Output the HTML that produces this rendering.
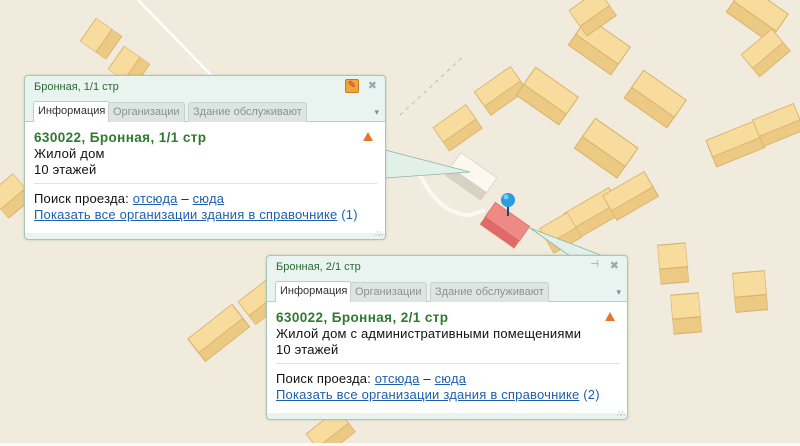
<!DOCTYPE html>
<html><head><meta charset="utf-8">
<style>
*{margin:0;padding:0;box-sizing:border-box}
body{width:800px;height:446px;overflow:hidden;background:#f0ebdd;position:relative;font-family:"Liberation Sans",sans-serif}
svg.map{position:absolute;left:0;top:0}
.pop{position:absolute;width:362px;height:165px;border:1px solid #a9c6b3;border-radius:4px;background:#e9f3ef;box-shadow:0 0 2px rgba(120,150,130,.4)}
.title{position:absolute;left:9px;top:5px;font-size:11px;color:#2d6a34}
.tabs{position:absolute;left:0;top:25px;width:100%;height:21px;border-bottom:1px solid #b9cfc2}
.tab{position:absolute;top:1px;height:20px;font-size:11px;line-height:19px;padding:0 4px;color:#8a948f;background:#dde4e1;border:1px solid #c8d2cd;border-bottom:none;border-radius:3px 3px 0 0}
.tab.act{background:#fff;color:#333;top:0;height:21px;border-color:#b9cfc2}
.body{position:absolute;left:0;top:46px;width:100%;height:111px;background:#fff;font-size:13px;letter-spacing:.2px;color:#111;padding:8px 0 0 9px;line-height:16px}
.body b{color:#2e7a2e;font-size:13.5px;letter-spacing:.4px}
.body a{color:#1e5fae;text-decoration:underline}
.body .lnk{color:#1e5fae}
.sep{height:1px;background:#dfe4e1;margin:5px 8px 7px 0}
.warn{position:absolute;right:12px;top:10px;width:0;height:0;border-left:5px solid transparent;border-right:5px solid transparent;border-bottom:9px solid #e5752f}
.grip{position:absolute;right:3px;bottom:1px;font-size:7px;color:#889;letter-spacing:-1px}
.x{position:absolute;right:8px;top:3px;font-size:11px;color:#9aa}
.dd{position:absolute;right:6px;top:31px;font-size:9px;color:#889}
</style></head><body>
<svg class="map" width="800" height="446" viewBox="0 0 800 446">
<defs>
<g id="b"><rect x="-20" y="-6" width="40" height="20" fill="#ecca84" stroke="#d8b46c" stroke-width=".8"/><rect x="-20" y="-12" width="40" height="16" fill="#f8dc9e" stroke="#d8b46c" stroke-width=".8"/></g>
</defs>
<line x1="138" y1="0" x2="212" y2="76" stroke="#fff" stroke-width="2.5"/>
<line x1="400" y1="115" x2="465" y2="55" stroke="#c9c4b6" stroke-width="1.2" stroke-dasharray="4,4"/>
<path d="M420 175 Q440 215 470 215 L485 210" stroke="#fbf9f3" stroke-width="4" fill="none"/>
<g transform="translate(100,38) rotate(-55) scale(.7,1.2)"><use href="#b"/></g>
<g transform="translate(128,66) rotate(-55) scale(.7,1.2)"><use href="#b"/></g>
<g transform="translate(457,127) rotate(-35) scale(1,1.1)"><use href="#b"/></g>
<g transform="translate(500,90) rotate(-35) scale(1.1,1.1)"><use href="#b"/></g>
<g transform="translate(548,95) rotate(35) scale(1.3,1.3)"><use href="#b"/></g>
<g transform="translate(607,147) rotate(35) scale(1.3,1.4)"><use href="#b"/></g>
<g transform="translate(600,45) rotate(35) scale(1.3,1.3)"><use href="#b"/></g>
<g transform="translate(592,12) rotate(-35) scale(.9,1.2)"><use href="#b"/></g>
<g transform="translate(656,98) rotate(35) scale(1.3,1.3)"><use href="#b"/></g>
<g transform="translate(593,212) rotate(-30) scale(1.3,1.1)"><use href="#b"/></g>
<g transform="translate(630,195) rotate(-30) scale(1.2,1.1)"><use href="#b"/></g>
<g transform="translate(560,232) rotate(-30) scale(.8,1.1)"><use href="#b"/></g>
<g transform="translate(735,143) rotate(-22) scale(1.3,1.1)"><use href="#b"/></g>
<g transform="translate(778,124) rotate(-22) scale(1.1,1.1)"><use href="#b"/></g>
<g transform="translate(758,12) rotate(35) scale(1.3,1.3)"><use href="#b"/></g>
<g transform="translate(765,52) rotate(-40) scale(1,1.1)"><use href="#b"/></g>
<g transform="translate(673,262) rotate(-5) scale(.7,1.5)"><use href="#b"/></g>
<g transform="translate(686,312) rotate(-5) scale(.7,1.5)"><use href="#b"/></g>
<g transform="translate(750,290) rotate(-5) scale(.8,1.5)"><use href="#b"/></g>
<g transform="translate(218,332) rotate(-38) scale(1.4,1.1)"><use href="#b"/></g>
<g transform="translate(262,300) rotate(-38) scale(1,1.1)"><use href="#b"/></g>
<g transform="translate(330,432) rotate(-38) scale(1,1.1)"><use href="#b"/></g>
<g transform="translate(10,195) rotate(-40) scale(.8,1.2)"><use href="#b"/></g>
<g transform="translate(472,175) rotate(35)"><rect x="-22" y="-6" width="44" height="22" fill="#d8d1c4"/><rect x="-22" y="-12" width="44" height="18" fill="#fbf8ef" stroke="#ccc" stroke-width=".6"/></g>
<g transform="translate(505,225) rotate(35)"><rect x="-21" y="-8" width="42" height="22" fill="#e06a66"/><rect x="-21" y="-13" width="42" height="18" fill="#ee8a86" stroke="#d06060" stroke-width=".6"/></g>
<line x1="508" y1="205" x2="508" y2="216" stroke="#1a4a7a" stroke-width="2"/>
<circle cx="508" cy="200" r="7" fill="#2a9ce0"/><circle cx="506" cy="197" r="2.5" fill="#7fcaf5"/>
<polygon points="385,150 470,172 385,178" fill="#e1f1ea" stroke="#8fb3a0" stroke-width=".8"/>
<polygon points="570,256 530,228 603,256" fill="#e1f1ea" stroke="#8fb3a0" stroke-width=".8"/>
<rect x="0" y="443" width="800" height="3" fill="#fafaf7"/>
</svg>

<div class="pop" style="left:24px;top:75px">
<div class="title">Бронная, 1/1 стр</div>
<div style="position:absolute;right:26px;top:3px;width:14px;height:14px;background:#f0a43a;border:1px solid #c77a1c;border-radius:2px;color:#c0302a;font-size:10px;line-height:12px;text-align:center">✎</div>
<div class="x">✖</div>
<div class="tabs">
<div class="tab act" style="left:8px">Информация</div>
<div class="tab" style="left:83px">Организации</div>
<div class="tab" style="left:163px">Здание обслуживают</div>
</div>
<div class="dd">▾</div>
<div class="body">
<b>630022, Бронная, 1/1 стр</b><br>Жилой дом<br>10 этажей
<div class="sep"></div>
Поиск проезда: <a>отсюда</a> – <a>сюда</a><br><a>Показать все организации здания в справочнике</a> <span class="lnk">(1)</span>
<div class="warn"></div>
</div>
<div class="grip">∴∴</div>
</div>

<div class="pop" style="left:266px;top:255px">
<div class="title">Бронная, 2/1 стр</div>
<div style="position:absolute;right:28px;top:3px;font-size:10px;color:#99a">⊣</div>
<div class="x">✖</div>
<div class="tabs">
<div class="tab act" style="left:8px">Информация</div>
<div class="tab" style="left:83px">Организации</div>
<div class="tab" style="left:163px">Здание обслуживают</div>
</div>
<div class="dd">▾</div>
<div class="body">
<b>630022, Бронная, 2/1 стр</b><br>Жилой дом с административными помещениями<br>10 этажей
<div class="sep"></div>
Поиск проезда: <a>отсюда</a> – <a>сюда</a><br><a>Показать все организации здания в справочнике</a> <span class="lnk">(2)</span>
<div class="warn"></div>
</div>
<div class="grip">∴∴</div>
</div>
</body></html>
